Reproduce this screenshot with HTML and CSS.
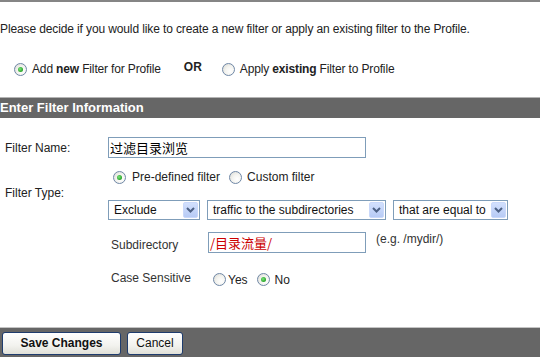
FILE: index.html
```html
<!DOCTYPE html>
<html>
<head>
<meta charset="utf-8">
<link rel="stylesheet" href="styles.css">
</head>
<body>
<div class="page">
  <div class="topline"></div>
  <p class="intro">Please decide if you would like to create a new filter or apply an existing filter to the Profile.</p>
  <div class="choice">
    <span class="opt first"><span class="radio on"></span><span class="otxt">Add <b>new</b> Filter for Profile</span></span>
    <span class="or">OR</span>
    <span class="opt"><span class="radio"></span><span class="otxt">Apply <b>existing</b> Filter to Profile</span></span>
  </div>
  <div class="section-head">Enter Filter Information</div>
  <div class="form">
    <span class="lbl name-lbl">Filter Name:</span>
    <div class="field name-field">过滤目录浏览</div>
    <span class="lbl type-lbl">Filter Type:</span>
    <div class="types">
      <span class="radio on"></span><span class="rtxt">Pre-defined filter</span>
      <span class="radio custom"></span><span class="rtxt">Custom filter</span>
    </div>
    <div class="selects">
      <div class="select w1"><span class="sel-txt">Exclude</span><span class="sel-btn"><svg width="9" height="6" viewBox="0 0 9 6"><polyline points="1,1 4.5,4.5 8,1" fill="none" stroke="#4d6185" stroke-width="2"/></svg></span></div>
      <div class="select w2"><span class="sel-txt">traffic to the subdirectories</span><span class="sel-btn"><svg width="9" height="6" viewBox="0 0 9 6"><polyline points="1,1 4.5,4.5 8,1" fill="none" stroke="#4d6185" stroke-width="2"/></svg></span></div>
      <div class="select w3"><span class="sel-txt">that are equal to</span><span class="sel-btn"><svg width="9" height="6" viewBox="0 0 9 6"><polyline points="1,1 4.5,4.5 8,1" fill="none" stroke="#4d6185" stroke-width="2"/></svg></span></div>
    </div>
    <div class="sub-row">
      <span class="sub-lbl">Subdirectory</span>
      <div class="field sub-field">/目录流量/</div>
      <span class="hint">(e.g. /mydir/)</span>
    </div>
    <div class="case-row">
      <span class="case-lbl">Case Sensitive</span>
      <span class="radio"></span><span class="ctxt">Yes</span>
      <span class="radio on no"></span><span class="ctxt">No</span>
    </div>
  </div>
  <div class="footer">
    <span class="btn save">Save Changes</span>
    <span class="btn cancel">Cancel</span>
  </div>
</div>
</body>
</html>
```
FILE: styles.css
```css
html, body {
  margin: 0;
  padding: 0;
  background: #fff;
  overflow: hidden;
}
.page {
  font-family: "Liberation Sans", Arial, sans-serif;
  font-size: 12px;
  color: #222;
  width: 540px;
  height: 357px;
  overflow: hidden;
}
.topline {
  height: 2px;
  background: #858585;
}
.intro {
  margin: 20px 0 0 0;
  line-height: 14px;
  height: 14px;
  letter-spacing: -0.12px;
  white-space: nowrap;
}
.choice {
  margin-top: 25px;
  height: 16px;
  display: flex;
  align-items: center;
  line-height: 16px;
}
.opt {
  display: flex;
  align-items: center;
}
.otxt {
  white-space: nowrap;
  letter-spacing: -0.15px;
}
.opt.first .radio {
  margin-left: 14px;
  margin-right: 5px;
}
.opt .radio {
  margin-right: 5px;
}
.or {
  font-weight: bold;
  margin: -4px 20px 0 23px;
}
.radio {
  display: inline-block;
  box-sizing: border-box;
  width: 13px;
  height: 13px;
  border-radius: 50%;
  border: 1px solid #6f87a6;
  background: radial-gradient(circle at 65% 65%, #ffffff 0%, #f4f4f0 45%, #d8d8d2 100%);
  position: relative;
  flex: none;
}
.radio.on::after {
  content: "";
  position: absolute;
  left: 3px;
  top: 3px;
  width: 5px;
  height: 5px;
  border-radius: 50%;
  background: radial-gradient(circle at 40% 40%, #7de37d 0%, #26a326 70%, #1b8a1b 100%);
}
.section-head {
  margin-top: 20px;
  border-top: 1px solid #b4b4b4;
  background: #666666;
  color: #fff;
  font-weight: bold;
  font-size: 13px;
  height: 20px;
  line-height: 20px;
  padding-left: 0;
}
.form {
  display: grid;
  grid-template-columns: 103px 1fr;
  padding-left: 5px;
  margin-top: 19px;
}
.lbl {
  grid-column: 1;
}
.name-lbl {
  align-self: center;
  grid-row: 1;
}
.field {
  box-sizing: border-box;
  border: 1px solid #7f9db9;
  background: #fff;
  height: 21px;
  line-height: 19px;
  font-family: "Noto Sans CJK SC", "Liberation Sans", sans-serif;
  font-size: 13px;
  padding-left: 1px;
  color: #000;
  white-space: nowrap;
  overflow: hidden;
}
.name-field {
  grid-column: 2;
  grid-row: 1;
  width: 258px;
}
.type-lbl {
  grid-row: 2 / 4;
  align-self: center;
  margin-top: 8px;
}
.types {
  grid-column: 2;
  grid-row: 2;
  margin-top: 11px;
  height: 16px;
  display: flex;
  align-items: center;
}
.types .radio { margin-left: 5px; margin-right: 6px; }
.types .radio.custom { margin-left: 9px; margin-right: 5px; }
.selects {
  grid-column: 2;
  grid-row: 3;
  margin-top: 15px;
  display: flex;
  gap: 7px;
}
.select {
  box-sizing: border-box;
  height: 20px;
  border: 1px solid #7f9db9;
  display: flex;
  align-items: stretch;
  padding: 1px;
  background: #fff;
}
.w1 { width: 92px; }
.w2 { width: 179px; }
.w3 { width: 115px; }
.sel-txt {
  flex: 1;
  line-height: 16px;
  padding-left: 4px;
  color: #111;
  white-space: nowrap;
  overflow: hidden;
}
.sel-btn {
  width: 15px;
  flex: none;
  box-sizing: border-box;
  border: 1px solid #c9d8fa;
  border-radius: 2px;
  background: linear-gradient(#d2e0fd, #b7cbf5);
  display: flex;
  align-items: center;
  justify-content: center;
}
.sub-row {
  grid-column: 2;
  grid-row: 4;
  margin-top: 12px;
  display: flex;
  align-items: flex-start;
  padding-left: 3px;
}
.sub-lbl {
  width: 97px;
  margin-top: 6px;
  color: #333;
}
.sub-field {
  width: 158px;
  color: #cc0000;
}
.hint {
  margin-left: 10px;
  color: #333;
}
.case-row {
  grid-column: 2;
  grid-row: 5;
  margin-top: 18px;
  display: flex;
  align-items: center;
  padding-left: 3px;
  height: 16px;
}
.case-lbl {
  width: 102px;
  margin-top: -3px;
  color: #333;
}
.case-row .radio { margin-right: 2px; }
.case-row .radio.no { margin-left: 9px; margin-right: 5px; }
.ctxt { margin-top: 2px; }
.footer {
  margin-top: 40px;
  border-top: 1px solid #c4c4c4;
  background: #666666;
  height: 40px;
  padding: 4px 0 0 2px;
  display: flex;
  align-items: flex-start;
  gap: 6px;
}
.btn {
  box-sizing: border-box;
  height: 23px;
  line-height: 21px;
  border: 1px solid #1e3c6e;
  border-radius: 3px;
  background: linear-gradient(#ffffff, #f2f2ee 60%, #e0e0d8);
  text-align: center;
  color: #111;
}
.save { width: 119px; font-weight: bold; }
.cancel { width: 56px; }
```
